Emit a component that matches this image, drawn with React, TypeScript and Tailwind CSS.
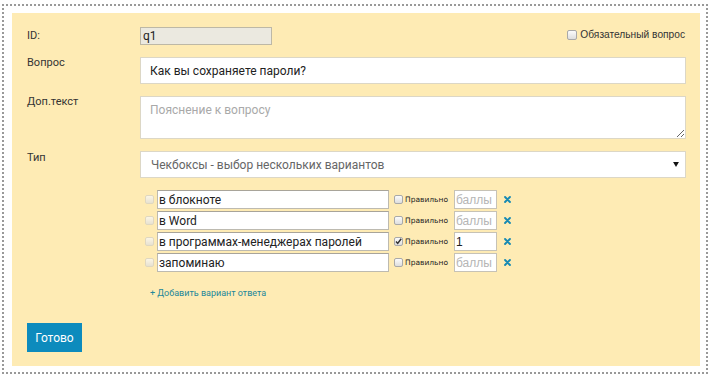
import React from "react";

const roboto = { fontFamily: "Roboto, 'Liberation Sans', sans-serif" };

function Box({ checked = false, faded = false, big = false }: { checked?: boolean; faded?: boolean; big?: boolean }) {
  return (
    <span
      className={`relative inline-block ${big ? "w-[10px] h-[10px]" : "w-[9px] h-[9px]"} shrink-0 rounded-[2px] border bg-gradient-to-b from-[#fbfbfb] to-[#dedede] ${
        faded ? "border-[#d2cfc6] opacity-70" : "border-[#a9a9a9]"
      }`}
    >
      {checked && (
        <svg viewBox="0 0 9 9" className="absolute -left-px -top-px w-[9px] h-[9px]">
          <path d="M2 4.6 L3.7 6.4 L7.2 1.8" fill="none" stroke="#333" strokeWidth="1.5" />
        </svg>
      )}
    </span>
  );
}

function Cross() {
  return (
    <svg viewBox="0 0 8 8" className="w-[7px] h-[7px]">
      <path d="M1.2 1.2 L6.8 6.8 M6.8 1.2 L1.2 6.8" stroke="#1689b3" strokeWidth="2.2" strokeLinecap="round" />
    </svg>
  );
}

const options = [
  { text: "в блокноте", ok: false, pts: "" },
  { text: "в Word", ok: false, pts: "" },
  { text: "в программах-менеджерах паролей", ok: true, pts: "1" },
  { text: "запоминаю", ok: false, pts: "" },
];

export default function App() {
  return (
    <div className="w-[715px] h-[383px] bg-white overflow-hidden" style={roboto}>
      <div className="ml-[2px] mt-[4px] w-[706px] h-[370px] border-2 border-dotted border-[#999] pl-[8px] pr-[6px] pt-[7px] pb-[6px]">
        <div className="h-full bg-[#feebb4] pl-[15px] pr-[14px] pt-[14px] text-[#222]">
          {/* ID */}
          <div className="flex items-center h-[18px]">
            <div className="w-[113px] text-[11px] leading-[12px] text-[#333]">ID:</div>
            <input
              readOnly
              defaultValue="q1"
              className="w-[132px] h-[18px] bg-[#ebe9e0] border border-[#bdb8a6] px-[2px] text-[12px] text-[#222] outline-none"
              style={roboto}
            />
            <label className="ml-auto flex items-center gap-[3px] pr-[1px] mb-[3px]">
              <Box big />
              <span className="text-[10.2px] text-[#333]" style={{ fontFamily: "'Liberation Sans', Arial, sans-serif" }}>
                Обязательный вопрос
              </span>
            </label>
          </div>

          {/* Вопрос */}
          <div className="flex mt-[12px]">
            <div className="w-[113px] text-[11px] leading-[12px] text-[#333]">Вопрос</div>
            <input
              readOnly
              defaultValue="Как вы сохраняете пароли?"
              className="flex-1 h-[27px] bg-white border border-[#dcd7c6] px-[9px] text-[12px] text-[#222] outline-none"
              style={roboto}
            />
          </div>

          {/* Доп.текст */}
          <div className="flex mt-[12px]">
            <div className="w-[113px] text-[11px] leading-[12px] text-[#333]">Доп.текст</div>
            <textarea
              readOnly
              placeholder="Пояснение к вопросу"
              className="flex-1 h-[43px] bg-white border border-[#dcd7c6] px-[9px] py-[6px] text-[12px] leading-[14px] text-[#222] placeholder:text-[#a9a9a9] outline-none"
              style={roboto}
            />
          </div>

          {/* Тип */}
          <div className="flex mt-[12px]">
            <div className="w-[113px] pt-[1px] text-[11px] leading-[12px] text-[#333]">Тип</div>
            <div className="flex-1 h-[27px] bg-white border border-[#dcd7c6] pl-[10px] pr-[6px] flex items-center justify-between">
              <span className="text-[12px] text-[#666]">Чекбоксы - выбор нескольких вариантов</span>
              <svg viewBox="0 0 7 6" className="w-[6px] h-[5px]">
                <path d="M0 0 L7 0 L3.5 6 Z" fill="#111" />
              </svg>
            </div>
          </div>

          {/* Варианты */}
          <div className="ml-[113px] mt-[12px] flex flex-col gap-[2px]">
            {options.map((o) => (
              <div key={o.text} className="flex items-center h-[19px]">
                <span className="ml-[5px] mr-[3px] flex">
                  <Box faded />
                </span>
                <input
                  readOnly
                  defaultValue={o.text}
                  className="w-[232px] h-[19px] bg-white border border-[#bdbab0] border-t-[#a8a49a] px-[1px] text-[12px] text-[#222] outline-none"
                  style={roboto}
                />
                <span className="ml-[5px] flex">
                  <Box checked={o.ok} />
                </span>
                <span
                  className="ml-[2px] w-[49px] text-[7.5px] text-[#222]"
                  style={{ fontFamily: "'DejaVu Sans', Verdana, sans-serif" }}
                >
                  Правильно
                </span>
                <input
                  readOnly
                  defaultValue={o.pts}
                  placeholder="баллы"
                  className="w-[43px] h-[19px] bg-white border border-[#c6c2b6] px-[1px] text-[12px] text-[#222] placeholder:text-[#b5b5b5] outline-none"
                  style={{ fontFamily: "'Liberation Sans', Arial, sans-serif" }}
                />
                <span className="ml-[7px] flex">
                  <Cross />
                </span>
              </div>
            ))}
          </div>

          <div className="ml-[123px] mt-[15px] text-[9px] leading-[12px] text-[#23879a]">+ Добавить вариант ответа</div>

          <button className="mt-[24px] w-[55px] h-[29px] bg-[#0d8bbd] text-white text-[12px] font-normal" style={roboto}>
            Готово
          </button>
        </div>
      </div>
    </div>
  );
}
